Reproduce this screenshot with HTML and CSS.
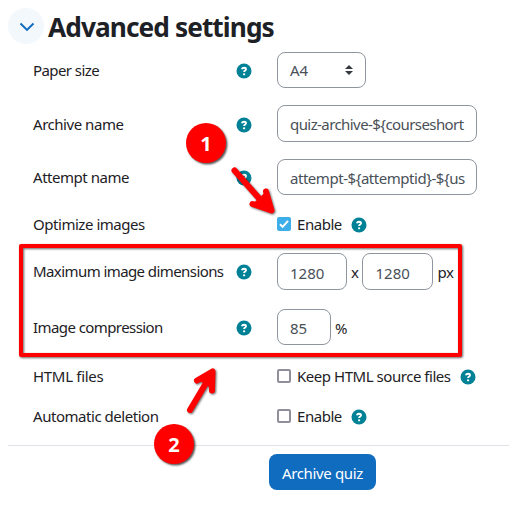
FILE: index.html
```html
<!DOCTYPE html>
<html lang="en">
<head>
<meta charset="utf-8">
<title>Advanced settings</title>
<link rel="stylesheet" href="styles.css">
</head>
<body>
<svg class="defs" width="0" height="0">
  <symbol id="help" viewBox="0 0 16 16"><circle cx="8" cy="8" r="7.500"/><path class="q" d="M5.800 6.200C6.200 5.100 7 4.700 8 4.700c1.200 0 2 .6 2 1.500C10 7.600 8.100 7.500 8.100 9.100"/><circle class="dot" cx="8.100" cy="11.300" r="1.150"/></symbol>
</svg>
<form class="settings">
  <header class="heading">
    <span class="toggle"><svg width="16" height="10" viewBox="0 0 16 10"><path d="M1.500 1.500 8 7.900l6.500-6.400"/></svg></span>
    <h3>Advanced settings</h3>
  </header>
  <div class="row r-paper">
    <div class="label tight">Paper size</div><svg class="help"><use href="#help"/></svg>
    <div class="control"><div class="field select">A4<svg width="8" height="10" viewBox="0 0 8 10"><path d="M0 4 4 0l4 4zM0 6h8l-4 4z"/></svg></div></div>
  </div>
  <div class="row r-archive">
    <div class="label">Archive name</div><svg class="help"><use href="#help"/></svg>
    <div class="control"><div class="field wide tall"><span class="tight">quiz-archive-${courseshort</span></div></div>
  </div>
  <div class="row r-attempt">
    <div class="label">Attempt name</div><svg class="help"><use href="#help"/></svg>
    <div class="control"><div class="field wide"><span>attempt-${attemptid}-${us</span></div></div>
  </div>
  <div class="row r-optimize">
    <div class="label">Optimize images</div><span></span>
    <div class="control"><span class="check on"><svg width="14" height="14" viewBox="0 0 14 14"><path d="m3 7.200 2.700 2.700L11 3.900"/></svg></span><span>Enable</span><svg class="help"><use href="#help"/></svg></div>
  </div>
  <div class="row r-dimensions">
    <div class="label tight">Maximum image dimensions</div><svg class="help"><use href="#help"/></svg>
    <div class="control units"><div class="field size">1280</div><span>x</span><div class="field size second">1280</div><span>px</span></div>
  </div>
  <div class="row r-compression">
    <div class="label tight">Image compression</div><svg class="help"><use href="#help"/></svg>
    <div class="control units"><div class="field percent">85</div><span>%</span></div>
  </div>
  <div class="row r-small">
    <div class="label loose">HTML files</div><span></span>
    <div class="control"><span class="check"></span><span>Keep HTML source files</span><svg class="help"><use href="#help"/></svg></div>
  </div>
  <div class="row r-small">
    <div class="label">Automatic deletion</div><span></span>
    <div class="control"><span class="check"></span><span>Enable</span><svg class="help"><use href="#help"/></svg></div>
  </div>
  <footer class="actions"><button type="button">Archive quiz</button></footer>
</form>
<div class="frame"></div>
<svg class="arrows" width="509" height="505" viewBox="0 0 509 505">
  <path d="M234.500 170.500 264 204M266 191.500 271.500 210.500 252.500 204M190 410 212 373M197 380.500 212.500 371.500 212 390.500"/>
  <path class="head" d="M266 191.500 271.500 210.500 252.500 204zM197 380.500 212.500 371.500 212 390.500 206 384z"/>
</svg>
<div class="marker one">1</div>
<div class="marker two">2</div>
</body>
</html>
```

FILE: styles.css
```css
* { box-sizing: border-box; }
body {
  margin: 0;
  height: 505px;
  overflow: hidden;
  position: relative;
  background: #fff;
  color: #1d2125;
  font: 15px/22px "Noto Sans", sans-serif;
  letter-spacing: -.46px;
}
.tight { letter-spacing: -.58px; }
.loose { letter-spacing: -.3px; }
.defs { position: absolute; }
.settings { padding-left: 8px; }
.heading {
  display: flex;
  align-items: center;
  gap: 4px;
  height: 43px;
  padding-top: 9px;
}
.toggle {
  display: flex;
  align-items: center;
  justify-content: center;
  width: 36px;
  height: 36px;
  border-radius: 50%;
  background: #f3f8fd;
}
.toggle svg { position: relative; left: 1px; top: 1px; }
.toggle path { fill: none; stroke: #0f6cbf; stroke-width: 2; }
h3 {
  margin: 0;
  padding-top: 2px;
  font-size: 26.25px;
  line-height: 32px;
  font-weight: 700;
  letter-spacing: -.92px;
}
.row {
  display: grid;
  grid-template-columns: 202px 16px 1fr;
  align-items: center;
  height: 53px;
  padding-left: 25px;
}
.r-archive { height: 54px; }
.r-optimize { height: 42px; }
.r-compression { height: 58px; }
.r-small { height: 40px; }
.label { white-space: nowrap; }
.r-archive .label { padding-top: 2px; }
.help { width: 16px; height: 16px; fill: #008196; position: relative; top: 1px; left: .5px; }
.r-archive > .help { top: 1.5px; }
.r-dimensions .label { padding-bottom: 2px; }
.r-dimensions .help { top: 0; }
.q { fill: none; stroke: #fff; stroke-width: 1.9; }
.dot { fill: #fff; }
.control { display: flex; align-items: center; padding-left: 26px; white-space: nowrap; }
.field {
  height: 36px;
  border: 1px solid #8f959e;
  border-radius: 8px;
  padding: 0 12px;
  line-height: 36px;
  color: #495057;
  background: #fff;
}
.field span { display: block; }
.tall { height: 37px; }
.select { width: 89px; display: flex; align-items: center; justify-content: space-between; }
.select svg { fill: #343a40; }
.wide { width: 200px; }
.size { width: 70px; height: 37px; line-height: 38px; }
.size + span, .second + span { padding-top: 1px; }
.select, .size, .percent { letter-spacing: 0; }
.second { width: 71px; }
.percent { width: 54px; }
.percent + span { padding-top: 2px; }
.units { gap: 4px; }
.check {
  width: 14px;
  height: 14px;
  margin-right: 6px;
  border: 2px solid #8f8f9d;
  border-radius: 2px;
}
.on { border: 0; background: #3daee9; }
.on svg { display: block; fill: none; stroke: #fff; stroke-width: 2; }
.control .help { margin-left: 9px; }
.actions {
  margin-top: 9px;
  padding: 8px 0 0 261px;
  border-top: 1px solid #dee2e6;
}
button {
  display: block;
  width: 107px;
  height: 36px;
  padding: 2px 0 0;
  border: 0;
  border-radius: 8px;
  background: #0f6cbf;
  color: #fff;
  font: inherit;
  letter-spacing: -.35px;
}
.frame {
  position: absolute;
  left: 19px;
  top: 244px;
  width: 443px;
  height: 113px;
  border: 4px solid #f00;
  border-radius: 2px;
  filter: drop-shadow(1.5px 1.5px 1px rgba(0, 0, 0, .6));
}
.arrows {
  position: absolute;
  left: 0;
  top: 0;
  fill: none;
  stroke: #f00;
  stroke-width: 6;
  stroke-linecap: round;
  stroke-linejoin: round;
  filter: drop-shadow(1.5px 1.5px 1px rgba(0, 0, 0, .6));
}
.head { stroke: none; fill: #f00; }
.marker {
  position: absolute;
  width: 40px;
  height: 40px;
  border-radius: 50%;
  background: #f00;
  color: #fff;
  font: 700 20px/41px "Open Sans", sans-serif;
  letter-spacing: 0;
  text-align: center;
  box-shadow: 1.5px 1.5px 2px rgba(0, 0, 0, .65);
}
.one { left: 186px; top: 123px; }
.two { left: 154px; top: 424px; }
```
